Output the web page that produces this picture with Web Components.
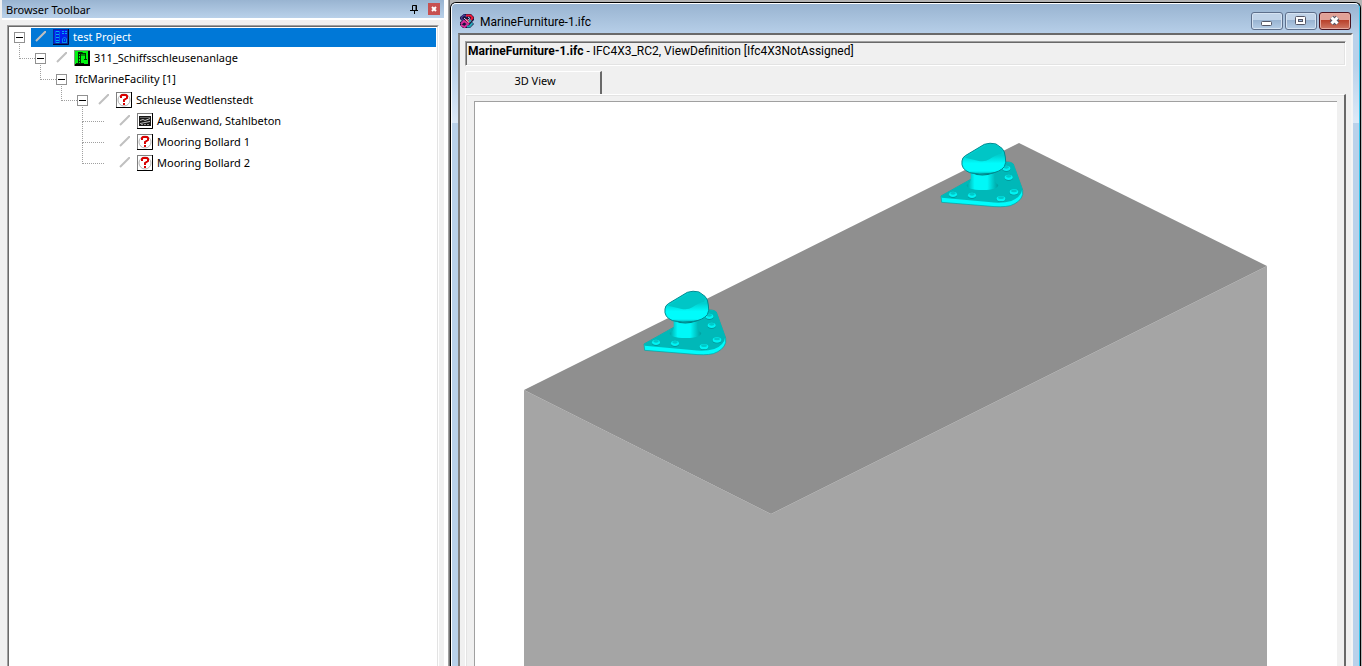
<!DOCTYPE html>
<html lang="en">
<head>
<meta charset="utf-8">
<title>MarineFurniture-1.ifc</title>
<style>
  html, body { height: 100%; }
  body {
    margin: 0;
    overflow: hidden;
    background: #f0f0f0;
    color: #000;
    font: 11px/16px "Noto Sans", "Open Sans", sans-serif;
  }
</style>
</head>
<body>
<viewer-app>
  <tool-panel slot="side" heading="Browser Toolbar">
    <tree-node label="test Project" icon="project" selected>
      <tree-node label="311_Schiffsschleusenanlage" icon="facility">
        <tree-node label="IfcMarineFacility [1]">
          <tree-node label="Schleuse Wedtlenstedt" icon="unknown">
            <tree-node label="Außenwand, Stahlbeton" icon="wall" leaf></tree-node>
            <tree-node label="Mooring Bollard 1" icon="unknown" leaf></tree-node>
            <tree-node label="Mooring Bollard 2" icon="unknown" leaf></tree-node>
          </tree-node>
        </tree-node>
      </tree-node>
    </tree-node>
  </tool-panel>
  <doc-window heading="MarineFurniture-1.ifc">
    <info-bar><b>MarineFurniture-1.ifc</b> - IFC4X3_RC2, ViewDefinition [Ifc4X3NotAssigned]</info-bar>
    <tab-view label="3D View"><model-scene></model-scene></tab-view>
  </doc-window>
</viewer-app>

<script>
const ICONS = {
  project: `<rect width="16" height="16" fill="#0a2a9c"/><path d="M1 1H14V14H1Z" fill="#0020f0"/>
    <path d="M2.500 2V14M6.500 2V14" stroke="#0064d8"/>
    <path d="M3 2.500H6M3 5.500H6M3 8.500H6M3 11.500H6M3 13.500H6" stroke="#00b0f0"/>
    <path d="M9 2.500H14M9 4.500H14" stroke="#00a8f0" stroke-dasharray="2 1"/>
    <path d="M9.500 13V10L11.500 8L13.500 10V13M9 13.500H14M11.500 10V12" stroke="#0090e8" fill="none"/>
    <path d="M15.500 0V15.500H0" stroke="#000838" stroke-width="1" fill="none"/>`,
  facility: `<rect width="16" height="16" fill="#7c9c7c"/><path d="M1 1H15V15H1Z" fill="#00f410"/>
    <path d="M4.500 2V13M6.500 4V13M4 5.500H7M4 8.500H7M4 11.500H7M4 3.500H12M11.500 3V8M6 5L11 5M10 9.500H13M11.500 8V9M2 13.500H10M5 2.500H8L10 4" stroke="#002b00" fill="none"/>
    <path d="M15 1V15H1" stroke="#000" fill="none" stroke-width="2"/>`,
  unknown: `<rect width="16" height="16" fill="#808080"/><path d="M1 1H15V15H1Z" fill="#fff"/>
    <circle cx="8" cy="8" r="6" fill="none" stroke="#b4b4b4"/>
    <path d="M5 6V4L6 3H10L11 4V6L8 8V10" fill="none" stroke="#d80000" stroke-width="2"/>
    <path d="M7 11H9V13H7Z" fill="#d80000"/>
    <path d="M15.500 0V15.500H0" stroke="#000" fill="none"/>`,
  wall: `<rect width="16" height="16" fill="#808080"/><path d="M1 1H15V15H1Z" fill="#fff"/>
    <path d="M2 3H14V13H2Z" fill="#181818"/>
    <path d="M3 4.500H13" stroke="#606060"/>
    <path d="M3 7.500L6 6.500L8 7.500L13 5.500M3 10.500L8 9.500L13 8.500" stroke="#c0c0c0" fill="none"/>
    <path d="M4 11.500H13" stroke="#909090" stroke-dasharray="2 1"/>
    <path d="M15.500 0V15.500H0" stroke="#000" fill="none"/>`
};

class BaseElement extends HTMLElement {
  connectedCallback() {
    if (this.shadowRoot) return;
    this.attachShadow({ mode: "open" }).innerHTML = this.render();
  }
}

customElements.define("viewer-app", class extends BaseElement {
  render() {
    return `<style>
      :host { display: grid; grid-template-columns: 448px minmax(0, 1fr); height: 100vh; background: #fff; }
    </style>
    <slot name="side"></slot><slot></slot>`;
  }
});

customElements.define("tool-panel", class extends BaseElement {
  render() {
    return `<style>
      :host { display: flex; flex-direction: column; box-sizing: border-box; padding: 0 4px 0 2px; background: linear-gradient(90deg, #f0f0f0 2px, #fff 2px); }
      header { display: flex; align-items: center; gap: 7px; height: 18px; padding: 0 4px; background: linear-gradient(#99b4d1, #b9d1ea); }
      h2 { flex: 1; margin: 0; font: inherit; padding-top: 1px; }
      button { display: block; padding: 0; border: 0; background: none; width: 12px; height: 12px; }
      button.close { background: #c75050; }
      svg { display: block; }
      .body { flex: 1; min-height: 0; display: flex; margin-top: 2px; padding: 5px 5px 0; background: #f0f0f0; }
      .tree { flex: 1; border: 1px solid; border-color: #a0a0a0 #fff #fff #a0a0a0; border-bottom: 0; display: flex; }
      .inner { flex: 1; border: 1px solid; border-color: #696969 #e3e3e3 #e3e3e3 #696969; border-bottom: 0; background: #fff; padding: 0 1px 0 5px; }
    </style>
    <header><h2>${this.getAttribute("heading")}</h2>
      <button aria-label="Pin"><svg width="12" height="12"><path d="M3.500 7V2.500H7.500V7M1 7.500H9M5.500 8V11M7 2V7" fill="none" stroke="#000"/></svg></button>
      <button class="close" aria-label="Close"><svg width="12" height="12"><path d="M4 4L8 8M8 4L4 8" stroke="#fff" stroke-width="2"/></svg></button>
    </header>
    <div class="body"><div class="tree"><div class="inner" role="tree"><slot></slot></div></div></div>`;
  }
});

customElements.define("tree-node", class extends BaseElement {
  render() {
    const icon = this.getAttribute("icon");
    const nested = this.parentElement.localName === "tree-node";
    return `<style>
      :host { display: block; position: relative; }
      .line { position: absolute; left: -16px; top: -10px; width: 15px; height: 20px; border: dotted #a0a0a0; border-width: 0 0 1px 1px; }
      .line.leaf { width: 21px; }
      .row { display: flex; align-items: center; height: 21px; }
      button, .gap { flex: none; box-sizing: border-box; width: 11px; height: 11px; margin: 0 6px 0 0; padding: 0; }
      button { position: relative; z-index: 1; border: 1px solid #919191; background: linear-gradient(#000, #000) center / 7px 1px no-repeat #fff; }
      .item { flex: 1; display: flex; align-items: center; box-sizing: border-box; height: 19px; padding-bottom: 2px; min-width: 0; }
      .slash { flex: none; margin: 0 7px 0 4px; }
      .icon { flex: none; margin-right: 4px; }
      .item.selected { background: #0078d7; color: #fff; }
      .kids { padding-left: 21px; }
      span { white-space: nowrap; }
      .plain span { padding-left: 2px; }
    </style>
    ${nested ? `<div class="line ${this.hasAttribute("leaf") ? "leaf" : ""}"></div>` : ""}
    <div class="row" role="treeitem">
      ${this.hasAttribute("leaf") ? `<div class="gap"></div>` : `<button aria-label="Collapse"></button>`}
      <div class="item ${this.hasAttribute("selected") ? "selected" : ""} ${icon ? "" : "plain"}">
        ${icon ? `<svg class="slash" width="11" height="11"><path d="M1 10L11 0" stroke="#c0c0c0" stroke-width="2"/></svg>
        <svg class="icon" width="16" height="16">${ICONS[icon]}</svg>` : ""}
        <span>${this.getAttribute("label")}</span>
      </div>
    </div>
    <div class="kids" role="group"><slot></slot></div>`;
  }
});

customElements.define("doc-window", class extends BaseElement {
  render() {
    return `<style>
      :host { display: flex; min-width: 0; box-sizing: border-box; padding: 2px 1px 0 2px; background: linear-gradient(90deg, #a0a0a0 1px, #696969 1px, #808080 2px, #b4b4b4 2px); }
      .frame { flex: 1; min-width: 0; display: flex; flex-direction: column; box-sizing: border-box; border: 1px solid #000; border-bottom: 0; border-radius: 6px 6px 0 0; overflow: hidden; background: #b9d1ea; }
      .glass { flex: 1; min-width: 0; min-height: 0; display: flex; flex-direction: column; border: 1px solid #fff; border-right-color: #35c5ec; border-bottom: 0; border-radius: 5px 5px 0 0; padding: 0 6px;
        background: linear-gradient(#99b4d1 0, #b9d1ea 32px, #b9d1ea 60px, #dce9f7 119px, #b9d1ea 119px); }
      header { display: flex; height: 29px; flex: none; padding: 0 2px 0 1px; }
      header > svg { margin: 9px 5px 0 0; }
      h1 { flex: 1; margin: 10px 0 0; font: 12px/16px Roboto, sans-serif; }
      .buttons { display: flex; gap: 2px; margin-top: 8px; }
      button { width: 32px; height: 18px; padding: 0; border: 1px solid #5d6f8b; border-radius: 3px; box-shadow: inset 0 0 0 1px #d5e3f2; background: linear-gradient(#c0d3e8 45%, #98b3d1 45%, #b5cde6); }
      button.close { border-color: #4b1420; box-shadow: inset 0 0 0 1px #e5a99f; background: linear-gradient(#e0a197 45%, #b9402a 45%, #cf7866); }
      button svg { display: block; margin: auto; }
      .client { flex: 1; min-height: 0; display: flex; flex-direction: column; box-sizing: border-box; border: 2px solid; border-width: 2px 2px 0; border-color: #696969 #f5f5f5 #fff #808080; padding: 6px 5px 0; background: #f0f0f0; }
    </style>
    <div class="frame"><div class="glass">
      <header>
        <svg width="16" height="16" fill="none">
          <path d="M5 1H12L15 4V7L13 9L15 11L11 15H4L1 12V9L3 8L1 6V4Z" fill="#14143c"/>
          <path d="M2 5L5 2L8 4M5 8L2 5" stroke="#4a3a90" stroke-width="1.500"/>
          <path d="M7 2.500H11.500L13.500 5L10 9L7 6.500" stroke="#f01838" stroke-width="2"/>
          <path d="M2 11L5 8L9 11L5.500 14L2 12" stroke="#d82c98" stroke-width="2"/>
          <path d="M5 5L10 9.500" stroke="#e8c8e8"/>
          <path d="M13.500 10L10.500 13.500H8M10 9L12 7" stroke="#28a8b8" stroke-width="2"/>
          <path d="M9 4L11 5.500L9 7" stroke="#a8d0f0"/>
        </svg>
        <h1>${this.getAttribute("heading")}</h1>
        <div class="buttons">
          <button aria-label="Minimize"><svg width="12" height="12"><rect x=".5" y="6.500" width="10" height="4" rx="1" fill="#fff" stroke="#535666"/></svg></button>
          <button aria-label="Maximize"><svg width="12" height="12"><rect x=".5" y="1.500" width="10" height="8" rx="1" fill="#fff" stroke="#535666"/><rect x="3.500" y="4.500" width="4" height="2" fill="#9bb9dc" stroke="#535666"/></svg></button>
          <button class="close" aria-label="Close"><svg width="12" height="12"><path d="M2.500 2.500L8.500 8.500M8.500 2.500L2.500 8.500" stroke="#535666" stroke-width="5"/><path d="M2.500 2.500L8.500 8.500M8.500 2.500L2.500 8.500" stroke="#fff" stroke-width="3"/></svg></button>
        </div>
      </header>
      <div class="client"><slot></slot></div>
    </div></div>`;
  }
});

customElements.define("info-bar", class extends BaseElement {
  render() {
    return `<style>
      :host { display: block; flex: none; height: 23px; padding-left: 2px; font: 12px/18px Roboto, sans-serif; white-space: nowrap; overflow: hidden; border: 1px solid; border-color: #a0a0a0 #fff #fff #a0a0a0; box-shadow: inset 1px 1px #696969, inset -1px -1px #e3e3e3; }
    </style><slot></slot>`;
  }
});

customElements.define("tab-view", class extends BaseElement {
  render() {
    return `<style>
      :host { flex: 1; min-height: 0; display: flex; flex-direction: column; padding-top: 5px; }
      button { box-sizing: border-box; flex: none; width: 137px; height: 23px; padding: 0 0 4px 4px; font: inherit; color: inherit; background: #f0f0f0; border: 1px solid #fff; border-right: 2px solid #696969; border-bottom: 0; border-radius: 2px 0 0; }
      .page { flex: 1; min-height: 0; display: flex; border: 1px solid #fff; border-right: 2px solid #696969; border-bottom: 0; padding: 6px 7px 0 8px; box-shadow: inset 1px 1px #e3e3e3; }
      .view { flex: 1; min-width: 0; border: 1px solid #a0a0a0; border-right: 0; border-bottom: 0; background: #fff; overflow: hidden; }
    </style>
    <button role="tab" aria-selected="true">${this.getAttribute("label")}</button>
    <div class="page" role="tabpanel"><div class="view"><slot></slot></div></div>`;
  }
});

customElements.define("model-scene", class extends BaseElement {
  render() {
    const bolt = (x, y, w = 12) => `<g><ellipse cx="${x}" cy="${y + 2}" rx="${w}" ry="8" fill="#008f92"/><ellipse cx="${x}" cy="${y}" rx="${w}" ry="8" fill="#00f4f4"/><ellipse cx="${x}" cy="${y - 3}" rx="${w - 4}" ry="4" fill="#00c8c8"/></g>`;
    return `<style>:host { display: block; height: 100%; } svg { display: block; width: 100%; height: 100%; }</style>
    <svg viewBox="475 102 862 564" preserveAspectRatio="xMidYMin slice" role="img" aria-label="Lock wall with two mooring bollards">
      <defs>
        <linearGradient id="neck"><stop offset="0" stop-color="#00a4a4"/><stop offset=".25" stop-color="#00f8f8"/><stop offset=".65" stop-color="#00f8f8"/><stop offset="1" stop-color="#009c9c"/></linearGradient>
        <linearGradient id="cap" x2="0" y2="1"><stop offset=".4" stop-color="#00d0d0"/><stop offset=".65" stop-color="#00fcfc"/><stop offset=".9" stop-color="#00fcfc"/><stop offset="1" stop-color="#00b0b0"/></linearGradient>
        <g id="bollard">
          <path d="M27 192L205 92Q235 86 244 96L272 174V188Q266 210 235 221Q210 227 165 222L29 211Z" fill="#00fcfc" stroke="#00a0a0" stroke-width="2"/>
          <path d="M27 192L205 92Q235 86 244 96L271 170Q268 195 238 207Q210 216 170 210L29 197Z" fill="#00b8b8"/>
          ${bolt(63, 187)}${bolt(120, 190)}${bolt(207, 200, 13)}${bolt(246, 180, 13)}${bolt(230, 136)}${bolt(223, 109)}
          <path d="M116 118V145Q114 155 104 159Q105 174 152 174Q197 174 199 159Q190 155 188 145V118Z" fill="url(#neck)"/>
          <path d="M114 120Q150 137 191 120" stroke="#007e80" stroke-width="4" fill="none"/>
          <path d="M90 87Q91 76 100 71L157 37Q174 31 192 36L210 49Q219 58 220 75Q224 92 217 104Q204 120 176 124Q143 130 113 122Q86 111 90 87Z" fill="url(#cap)" stroke="#008a90" stroke-width="3"/>
          <path d="M98 77L168 37Q187 33 200 43Q216 57 207 66Q191 68 172 82Q158 91 137 86Q112 80 98 77Z" fill="#00c6c6"/>
        </g>
      </defs>
      <path d="M524 390L771 514L1267 266V2000H524Z" fill="#a5a5a5"/>
      <path d="M524 390L1019 143L1267 266L771 514Z" fill="#8f8f8f"/>
      <use href="#bollard" transform="translate(635 280) scale(.3333)"/>
      <use href="#bollard" transform="translate(932 132) scale(.3333)"/>
    </svg>`;
  }
});
</script>
</body>
</html>
